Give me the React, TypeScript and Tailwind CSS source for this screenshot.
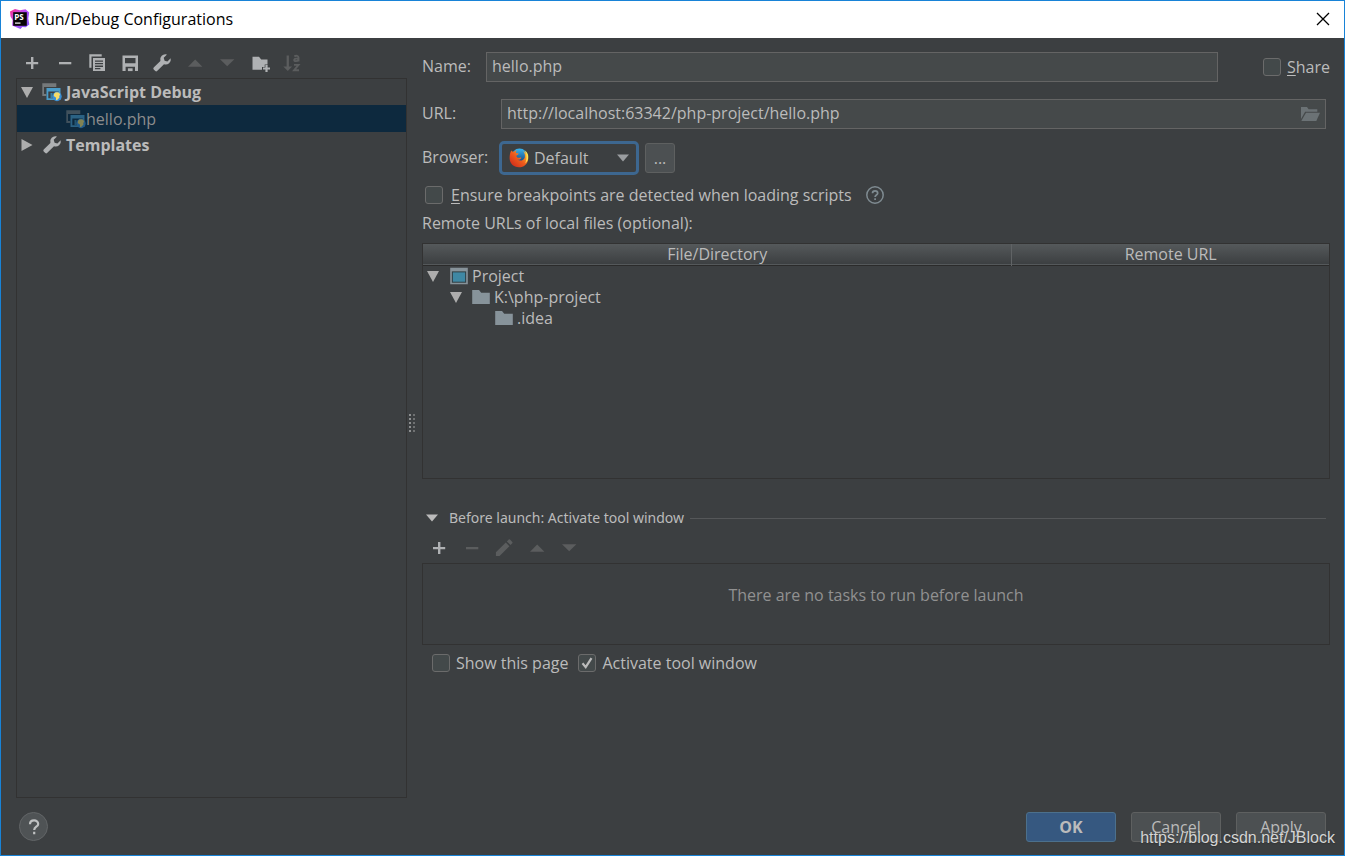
import { useState } from "react";
import type { ReactNode } from "react";

type IconProps = { children: ReactNode; size?: string };

function Icon({ children, size = "size-5" }: IconProps) {
  return (
    <svg viewBox="0 0 20 20" className={`${size} shrink-0`} fill="currentColor" aria-hidden="true">
      {children}
    </svg>
  );
}

const PlusIcon = () => (
  <Icon>
    <path d="M9 4h2.400v5H16.200v2.300H11.400v4.700H9v-4.700H4V9h5z" />
  </Icon>
);

const MinusIcon = () => (
  <Icon>
    <path d="M4 9h12.300v2.300H4z" />
  </Icon>
);

const CopyIcon = () => (
  <Icon>
    <path d="M2.300 1.300h12.400v2.200H4.500v11.200H2.300z" />
    <path
      fillRule="evenodd"
      d="M6 5h12v13H6zM8 7.400v1.300h8V7.400zM8 10v1.300h8V10zM8 12.600v1.300h8v-1.300zM8 15.100v1.200h5.400v-1.200z"
    />
  </Icon>
);

const SaveIcon = () => (
  <Icon>
    <path fillRule="evenodd" d="M2.500 2.500H18v15.600H2.500zM5 5v5.300h10.500V5zM5.600 13.700v4.400h9.400v-4.400z" />
    <path d="M7.900 15.300h4.700v2.800H7.900z" />
  </Icon>
);

const WrenchIcon = () => (
  <Icon>
    <path d="M18.700 5.200 15.400 8.500 12.600 7.700 11.700 4.700 15 1.500A5.200 5.200 0 0 0 8.400 8L1.700 14.600a1.300 1.300 0 0 0 0 1.800l1.600 1.700a1.300 1.300 0 0 0 1.800 0l6.900-6.800a5.200 5.200 0 0 0 6.700-6.100z" />
  </Icon>
);

const UpIcon = () => (
  <Icon>
    <path d="M3 13.700h14.400L10.200 6.600z" />
  </Icon>
);

const DownIcon = () => (
  <Icon>
    <path d="M3 6.200h14.400l-7.200 7.100z" />
  </Icon>
);

const NewFolderIcon = () => (
  <Icon>
    <path d="M2.500 3.800H9l2.200 2.600h6.300v5.100h-2.800v2.600H12v2.700H2.500z" />
    <path d="M15.400 12h2.200v2.400h2.400v2.200h-2.400V19h-2.200v-2.400H13v-2.200h2.400z" />
  </Icon>
);

const SortIcon = () => (
  <Icon>
    <path d="M4.600 2.500h2.300v11h3.200L5.800 18 1.300 13.500h3.300z" />
    <path
      fill="none"
      stroke="currentColor"
      strokeWidth="1.900"
      d="M12.300 3.300c1.800-.9 4.200-.6 4.200 1.300v4M16.500 5.400c-2.200 0-4.300.1-4.300 1.500 0 1.700 3 1.600 4.300-.1M12 11.900h4.500l-4.400 5.300h4.900"
    />
  </Icon>
);

const PencilIcon = () => (
  <Icon>
    <path d="M1.900 14.300 11.800 4.500l3.600 3.700L5.600 18H1.900zM12.900 3.400l1.800-1.800a1 1 0 0 1 1.300 0l2.300 2.300a1 1 0 0 1 0 1.300l-1.800 1.900z" />
  </Icon>
);

const JsDebugIcon = () => (
  <Icon>
    <path d="M.3 1.300h14v3.700H2v7h2.300v2H.3z" fill="#75797b" />
    <path fillRule="evenodd" d="M4.500 6h14v12h-14zM6.300 9.400v6.800h10.400V9.400z" fill="#4a9cc9" />
    <path d="M8.500 11h2v5.500h-2z" fill="#3a83a8" />
    <circle cx="15" cy="14.500" r="4.700" fill="#3a8fd6" />
    <path
      d="M12.200 11.400c1.300-1.300 3.500-1.500 5-.6l1 1.900-1 1.400.3 1.500-2.600 2.700-1-.6.200-2-2.400-1.600z"
      fill="#f6dc68"
    />
  </Icon>
);

const ProjectIcon = () => (
  <Icon size="size-[22px]">
    <path d="M2 2.500h16v15H2z" fill="#87939a" />
    <path d="M3.500 5.800h13v10.300h-13z" fill="#2e3c42" />
    <path d="M4.400 6.700h11.200v8.500H4.400z" fill="#3f88a4" />
  </Icon>
);

const FolderIcon = () => (
  <Icon size="size-[22px]">
    <path d="M2 3.700h6.200l2 2.500H18v10.200H2z" fill="#87939a" />
  </Icon>
);

const OpenFolderIcon = () => (
  <Icon>
    <path d="M0 3h6l1.600 2.200h8.700v2.600H4.100L0 15z" />
    <path d="M5 8.700h14L15.300 17H.3z" />
  </Icon>
);

const Arrow = ({ open }: { open: boolean }) => (
  <svg viewBox="0 0 12 12" className="size-3 shrink-0 text-[#adadad]" fill="currentColor" aria-hidden="true">
    {open ? <path d="M0 1h12L6 12z" /> : <path d="M.5 0 11.500 6 .5 12z" />}
  </svg>
);

const PhpStormLogo = () => (
  <svg viewBox="0 0 20 20" className="size-5 shrink-0" aria-hidden="true">
    <defs>
      <linearGradient id="ps" x1="0" y1="0" x2="1" y2="1">
        <stop offset="0" stopColor="#ff318c" />
        <stop offset=".45" stopColor="#b74af7" />
        <stop offset="1" stopColor="#7b5cff" />
      </linearGradient>
    </defs>
    <path
      d="m0 2.500 5-2.500 5 1.300 5.500-1 3.700 3.200-.9 6 1 6-3.600 2.800-3.400-.3L10.500 20l-8.400-3.500.5-5.400L.5 7.500z"
      fill="url(#ps)"
    />
    <path d="M3.200 3.200h13.600v13.600H3.200z" fill="#080508" />
    <path d="M5 13.500h5.500v1.200H5z" fill="#fff" />
    <text x="4.300" y="10.700" fontSize="8" fontWeight="700" fill="#fff" fontFamily="Open Sans, sans-serif">
      PS
    </text>
  </svg>
);

const FirefoxIcon = () => (
  <svg viewBox="0 0 20 20" className="size-5" aria-hidden="true">
    <defs>
      <linearGradient id="fox" x1="0" y1="1" x2="1" y2="0">
        <stop offset="0" stopColor="#c8201c" />
        <stop offset=".5" stopColor="#ee5b1c" />
        <stop offset="1" stopColor="#ffd83c" />
      </linearGradient>
      <linearGradient id="globe" x1="0" y1="0" x2="0" y2="1">
        <stop offset="0" stopColor="#39b5f0" />
        <stop offset="1" stopColor="#0d2c66" />
      </linearGradient>
    </defs>
    <circle cx="10.500" cy="8.700" r="8.200" fill="url(#globe)" />
    <path
      d="M2.200 2.500c.7.900 1.600 1.300 2.700 1.300 1-.9 1.800-1.400 2.900-1.500-.8.900-1.100 1.700-.9 2.600.8.400 2 .3 2.800.7-.2 1-1.200 1.400-2.200 2-.2 1 .1 1.500.8 2 1.500.7 2.700-.4 4 .1-.6 1.800-2.200 2.200-3.800 1.900 2.300 1.900 6.500 1 7.300-2.200.5-2.200-.2-4.700-1.800-6.300 3 1.300 5.200 4 5.200 7.300 0 5-4.100 8.900-9.400 8.900C4.600 19.300.6 15.300.6 10.300c0-3 .5-5.600 1.600-7.800z"
      fill="url(#fox)"
    />
    <path d="M15.600 2.200c3.200 2.200 4.400 5.600 3.300 9.100-.5 1.800-1.500 3-2.700 4 1.600-3.500 2.100-8.800-.6-13.100z" fill="#ffe14d" />
  </svg>
);

type ToolButtonProps = { label: string; disabled?: boolean; children: ReactNode };

function ToolButton({ label, disabled, children }: ToolButtonProps) {
  return (
    <button
      type="button"
      aria-label={label}
      title={label}
      disabled={disabled}
      className="size-5 text-[#afb1b3] disabled:text-[#5b5d5e]"
    >
      {children}
    </button>
  );
}

type CheckProps = { label: ReactNode; defaultChecked?: boolean; className?: string; gap?: string };

function Check({ label, defaultChecked, className = "", gap = "gap-1.5" }: CheckProps) {
  return (
    <label className={`flex items-center whitespace-nowrap ${gap} ${className}`}>
      <span className="relative size-[18px] shrink-0">
        <input
          type="checkbox"
          defaultChecked={defaultChecked}
          className="peer block size-[18px] appearance-none rounded-[3px] border border-[#6b6b6b] bg-[#43494a]"
        />
        <svg
          viewBox="0 0 18 18"
          className="pointer-events-none absolute inset-0 hidden size-[18px] peer-checked:block"
          fill="none"
          stroke="#bbbbbb"
          strokeWidth="2.200"
          aria-hidden="true"
        >
          <path d="m4.500 9.300 3.200 3.900 5.800-9" />
        </svg>
      </span>
      <span>{label}</span>
    </label>
  );
}

const field =
  "h-[30px] w-full min-w-0 border border-[#646464] bg-[#45494a] px-[5px] pb-0.5 text-[#bbbbbb] outline-none";
const dialogButton = "h-[30px] w-[90px] rounded-[3px] border";

export default function App() {
  const [launchOpen, setLaunchOpen] = useState(true);

  return (
    <div className="flex min-h-screen flex-col border border-[#1883d7] bg-[#3c3f41] font-['Open_Sans','Noto_Sans',sans-serif] text-base leading-[22px] text-[#bbbbbb]">
      {/* Title bar */}
      <header className="flex h-[37px] items-center bg-white pr-[11px] pb-0.5 pl-[9px] text-black">
        <PhpStormLogo />
        <h1 className="ml-[5px] flex-1">Run/Debug Configurations</h1>
        <button type="button" aria-label="Close" className="size-5">
          <svg viewBox="0 0 20 20" className="size-5" stroke="#000" strokeWidth="1.300" aria-hidden="true">
            <path d="m4 4 12 12M16 4 4 16" />
          </svg>
        </button>
      </header>

      <main className="flex flex-1 pt-[10px] pr-[14px] pl-[15px]">
        {/* Configurations list */}
        <aside className="flex w-[391px] shrink-0 flex-col">
          <div className="flex h-[30px] w-[286px] items-center justify-between pl-1.5">
            <ToolButton label="Add New Configuration"><PlusIcon /></ToolButton>
            <ToolButton label="Remove Configuration"><MinusIcon /></ToolButton>
            <ToolButton label="Copy Configuration"><CopyIcon /></ToolButton>
            <ToolButton label="Save Configuration"><SaveIcon /></ToolButton>
            <ToolButton label="Edit Templates"><WrenchIcon /></ToolButton>
            <ToolButton label="Move Up" disabled><UpIcon /></ToolButton>
            <ToolButton label="Move Down" disabled><DownIcon /></ToolButton>
            <ToolButton label="Create New Folder"><NewFolderIcon /></ToolButton>
            <ToolButton label="Sort Configurations" disabled><SortIcon /></ToolButton>
          </div>
          <ul className="flex-1 border border-[#323232]">
            <li>
              <div className="flex h-[26px] items-center pl-1 font-bold">
                <Arrow open />
                <span className="mr-1 ml-[9px] flex"><JsDebugIcon /></span>
                JavaScript Debug
              </div>
              <ul>
                <li className="flex h-[27px] items-center bg-[#0d293e] pl-[49px] text-[#8c8c8c]">
                  <span className="flex opacity-50"><JsDebugIcon /></span>
                  hello.php
                </li>
              </ul>
            </li>
            <li className="flex h-[26px] items-center pl-1 font-bold">
              <Arrow open={false} />
              <span className="mr-1 ml-[9px] flex text-[#afb1b3]"><WrenchIcon /></span>
              Templates
            </li>
          </ul>
        </aside>

        {/* Splitter grip */}
        <div className="flex w-[15px] shrink-0 flex-col justify-center gap-0.5 pl-0.5">
          {[0, 1, 2, 3, 4].map((i) => (
            <div key={i} className="flex gap-0.5">
              <span className="size-0.5 bg-[#8d8f90]" />
              <span className="size-0.5 bg-[#6f7172]" />
            </div>
          ))}
        </div>

        {/* Configuration form */}
        <section className="min-w-0 flex-1 pt-1">
          <div className="flex items-center">
            <label htmlFor="name" className="w-16 shrink-0 pb-0.5">Name:</label>
            <input id="name" className={field} defaultValue="hello.php" />
            <Check
              className="ml-[45px]"
              label={<><span className="underline underline-offset-2">S</span>hare</>}
            />
          </div>

          <div className="mt-[17px] flex items-center pr-1">
            <label htmlFor="url" className="w-[79px] shrink-0 pb-0.5">URL:</label>
            <div className="relative flex-1">
              <input id="url" className={field} defaultValue="http://localhost:63342/php-project/hello.php" />
              <button type="button" aria-label="Browse" className="absolute top-[5px] right-[5px] size-5 text-[#6b7275]">
                <OpenFolderIcon />
              </button>
            </div>
          </div>

          <div className="mt-3 flex items-center">
            <label htmlFor="browser" className="w-[77px] shrink-0 pb-0.5">Browser:</label>
            <div className="relative">
              <select
                id="browser"
                className="block h-[34px] w-[140px] appearance-none rounded-[5px] border-3 border-[#3d6790] bg-[#3c3f41] pl-8 outline-none"
              >
                <option>Default</option>
              </select>
              <span className="pointer-events-none absolute inset-y-0 left-[10px] flex items-center"><FirefoxIcon /></span>
              <span className="pointer-events-none absolute inset-y-0 right-[10px] flex items-center">
                <svg viewBox="0 0 12 8" className="h-2 w-3" fill="#9a9da0" aria-hidden="true"><path d="M0 .5h12L6 7.500z" /></svg>
              </span>
            </div>
            <button
              type="button"
              aria-label="Configure browsers"
              className="ml-1.5 size-[30px] rounded-[3px] border border-[#5e6060] bg-[#4c5052]"
            >
              ...
            </button>
          </div>

          <div className="mt-[9px] flex items-center pl-[3px]">
            <Check
              gap="gap-2"
              label={<><span className="underline underline-offset-2">E</span>nsure breakpoints are detected when loading scripts</>}
            />
            <button type="button" aria-label="Help on breakpoints" className="ml-[14px] size-[18px]">
              <svg viewBox="0 0 18 18" className="size-[18px]" fill="none" stroke="#7f8b91" strokeWidth="1.500" aria-hidden="true">
                <circle cx="9" cy="9" r="8.200" />
                <path d="M6.500 7.200c0-3.200 5.200-3.200 5.200 0 0 1.900-2.600 1.800-2.600 3.800M9.100 12.300v1.700" strokeWidth="1.700" />
              </svg>
            </button>
          </div>

          <p className="mt-1.5">Remote URLs of local files (optional):</p>

          <div className="mt-[9px] h-[236px] border border-[#323232]">
            <table className="w-full table-fixed border-collapse">
              <thead>
                <tr className="h-[21px] border-b border-[#2b2b2b] bg-linear-to-b from-[#55595b] to-[#3c3f41] leading-5">
                  <th className="w-[65%] border-r border-[#606365] p-0 font-normal">File/Directory</th>
                  <th className="p-0 font-normal">Remote URL</th>
                </tr>
              </thead>
              <tbody className="leading-[21px]">
                <tr>
                  <td className="p-0">
                    <div className="flex h-[21px] items-center pl-1">
                      <Arrow open />
                      <span className="mr-0.5 ml-[9px] flex"><ProjectIcon /></span>
                      Project
                    </div>
                  </td>
                  <td className="p-0" />
                </tr>
                <tr>
                  <td className="p-0">
                    <div className="flex h-[21px] items-center pl-[27px]">
                      <Arrow open />
                      <span className="mr-0.5 ml-2 flex"><FolderIcon /></span>
                      K:\php-project
                    </div>
                  </td>
                  <td className="p-0" />
                </tr>
                <tr>
                  <td className="p-0">
                    <div className="flex h-[21px] items-center pl-[70px]">
                      <FolderIcon />
                      <span className="ml-0.5">.idea</span>
                    </div>
                  </td>
                  <td className="p-0" />
                </tr>
              </tbody>
            </table>
          </div>

          {/* Before launch */}
          <div className="mt-7 flex items-center gap-1.5 pr-1 pl-1">
            <button
              type="button"
              aria-expanded={launchOpen}
              onClick={() => setLaunchOpen(!launchOpen)}
              className="flex shrink-0 items-center gap-[11px] font-['Noto_Sans','Open_Sans',sans-serif] text-sm leading-[22px]"
            >
              <svg viewBox="0 0 12 8" className="h-2 w-3" fill="#bbbbbb" aria-hidden="true"><path d="M0 .5h12L6 7.500z" /></svg>
              Before launch: Activate tool window
            </button>
            <hr className="flex-1 border-[#555759]" />
          </div>
          {launchOpen && (
            <>
              <div className="mt-2 flex h-[22px] w-[157px] items-center justify-between pl-[7px]">
                <ToolButton label="Add Task"><PlusIcon /></ToolButton>
                <ToolButton label="Remove Task" disabled><MinusIcon /></ToolButton>
                <ToolButton label="Edit Task" disabled><PencilIcon /></ToolButton>
                <ToolButton label="Move Task Up" disabled><UpIcon /></ToolButton>
                <ToolButton label="Move Task Down" disabled><DownIcon /></ToolButton>
              </div>
              <div className="mt-1 h-[82px] border border-[#323232] pt-5 text-center text-[#919191]">
                There are no tasks to run before launch
              </div>
              <div className="mt-[7px] flex gap-2.5 pl-2.5">
                <Check label="Show this page" />
                <Check label="Activate tool window" defaultChecked />
              </div>
            </>
          )}
        </section>
      </main>

      {/* Dialog buttons */}
      <footer className="relative flex h-[57px] items-center gap-[15px] pr-[18px] pl-[18px]">
        <button
          type="button"
          aria-label="Help"
          className="mr-auto flex size-[29px] items-center justify-center rounded-full border border-[#626567] bg-[#4f5355]"
        >
          <svg viewBox="0 0 18 18" className="size-[18px]" fill="none" stroke="#bfc1c2" strokeWidth="2.200" aria-hidden="true">
            <path d="M5 6.200c0-5 8.200-5 8.200-.3 0 2.900-4 2.800-4 6M9.200 13.700v2.600" />
          </svg>
        </button>
        <button type="button" className={`${dialogButton} border-[#4c708c] bg-[#365880] font-bold`}>OK</button>
        <button type="button" className={`${dialogButton} border-[#5e6060] bg-[#4c5052]`}>Cancel</button>
        <button type="button" className={`${dialogButton} border-[#5e6060] bg-[#4c5052]`}>Apply</button>
        <span className="pointer-events-none absolute right-[9px] bottom-[6px] font-['Liberation_Sans',sans-serif] text-base leading-[22px] text-[#d4d5d5] [text-shadow:0_1px_1px_#333]">
          https://blog.csdn.net/JBlock
        </span>
      </footer>
    </div>
  );
}
